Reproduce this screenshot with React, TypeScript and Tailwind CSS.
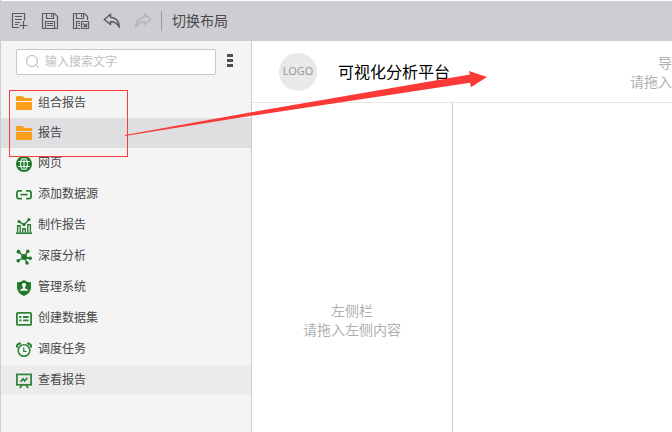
import { ReactNode, useState } from "react";

const FONT = "font-['Noto_Sans','Noto_Sans_CJK_SC',sans-serif]";

function IconNew() {
  return (
    <svg width="18" height="18" viewBox="0 0 18 18" fill="none" stroke="#5c5c60" strokeWidth="1.200">
      <path d="M9 15.500H2.500V1.500H14.500V8.500M5 4.500H12M5 7.500H12M5 10.500H10M5 12.500H8" />
      <path d="M13.500 9V17M9.500 13.500H17.500" />
    </svg>
  );
}

function IconSave() {
  return (
    <svg width="18" height="18" viewBox="0 0 18 18" fill="none" stroke="#5c5c60" strokeWidth="1.200">
      <path d="M1.500 1.500H13.500L16.500 4.500V16.500H1.500Z" />
      <path d="M5.500 1.500V6.500H12.500V1.500M10.500 2.500V5M4.500 16.500V9.500H13.500V16.500M6 11.500H12M6 13.500H12" />
    </svg>
  );
}

function IconSaveAs() {
  return (
    <svg width="18" height="18" viewBox="0 0 18 18" fill="none" stroke="#5c5c60" strokeWidth="1.200">
      <path d="M8 16.500H1.500V1.500H12.500L15.500 4.500V8" />
      <path d="M4.500 1.500V6.500H11.500V1.500M9.500 2.500V5M4.500 16V9.500H8M6 11.500H8M6 13.500H8" />
      <path d="M9.500 9.500H16.500V16.500H9.500Z" />
      <path d="M11 11.500L14 14M14.500 11.500V14.500H11.500" strokeWidth="1.300" />
    </svg>
  );
}

function IconArrow({ color, flip }: { color: string; flip?: boolean }) {
  return (
    <svg width="18" height="18" viewBox="0 0 18 18" fill="none" stroke={color} strokeWidth="1.500" strokeLinejoin="round">
      <path
        transform={flip ? "translate(18 0) scale(-1 1)" : undefined}
        d="M7.500 2.200L1.200 7.500L7.500 12.500V9.700C11.500 9.500 14.300 11.300 16.300 15.200C16.300 9.300 12.500 5.500 7.500 5.300Z"
      />
    </svg>
  );
}

function IconFolder() {
  return (
    <svg width="16" height="16" viewBox="0 0 16 16" fill="#faa01e">
      <path d="M0 1Q0 0 1 0H6Q7 0 7.500 1L8 2H15Q16 2 16 3V5H0Z" />
      <path d="M0 6H16V13Q16 14 15 14H1Q0 14 0 13Z" />
    </svg>
  );
}

function IconGlobe() {
  return (
    <svg width="16" height="16" viewBox="0 0 16 16" fill="none" stroke="#e4efe5" strokeWidth="1.200">
      <circle cx="8" cy="8" r="8" fill="#20792b" stroke="none" />
      <path d="M8 2V14M2.200 5.500H13.800M2.200 10.500H13.800" />
      <path d="M6.500 2Q2.500 8 6.500 14M9.500 2Q13.500 8 9.500 14" />
    </svg>
  );
}

function IconLink() {
  return (
    <svg width="16" height="16" viewBox="0 0 16 16" fill="none" stroke="#2e8237" strokeWidth="1.800">
      <path d="M6 3.900H3Q.9 3.900 .9 6V9.500Q.9 11.600 3 11.600H6M10 3.900H13Q15.100 3.900 15.100 6V9.500Q15.100 11.600 13 11.600H10M4.500 7.700H11.500" />
    </svg>
  );
}

function IconChart() {
  return (
    <svg width="16" height="16" viewBox="0 0 16 16" fill="none" stroke="#2e8237" strokeWidth="1.400">
      <path d="M0 15.300H16M1.600 15V7.800H4.200V15M6.700 15V10.800H9.300V15M11.800 15V6.800H14.400V15" />
      <path d="M3 3.500L8 6.800L13 1.500" strokeWidth="1.500" />
      <g fill="#20792b" stroke="none">
        <circle cx="3" cy="3.500" r="1.500" />
        <circle cx="8" cy="6.600" r="1.600" />
        <circle cx="13" cy="1.500" r="1.500" />
      </g>
    </svg>
  );
}

function IconNodes() {
  return (
    <svg width="16" height="16" viewBox="0 0 16 16" fill="#20792b" stroke="#20792b">
      <path d="M8 8L2.500 2.500M8 8L12 2.500M8 8L2 12M8 8L14 9.500M8 8L11 14" strokeWidth="1.400" />
      <g stroke="none">
        <circle cx="8.200" cy="8" r="3" />
        <circle cx="2.500" cy="2.700" r="2" />
        <circle cx="11.800" cy="2.200" r="1.700" />
        <circle cx="2.200" cy="11.800" r="1.800" />
        <circle cx="14.200" cy="9.200" r="1.800" />
        <circle cx="11" cy="14" r="1.800" />
      </g>
    </svg>
  );
}

function IconShield() {
  return (
    <svg width="16" height="16" viewBox="0 0 16 16" fill="#20792b">
      <path d="M8 0Q11 2.300 15 2.500V7.500Q14.500 13.500 8 16Q1.500 13.500 1 7.500V2.500Q5 2.300 8 0Z" />
      <path fill="#f4f4f4" d="M8 3A2 2 0 0 1 9 6.800L9.200 8.500Q12 8.800 12 10.800H4Q4 8.800 6.800 8.500L7 6.800A2 2 0 0 1 8 3Z" />
    </svg>
  );
}

function IconList() {
  return (
    <svg width="16" height="16" viewBox="0 0 16 16" fill="none" stroke="#2e8237" strokeWidth="1.800">
      <rect x=".9" y="1.900" width="14.200" height="12" rx="1" />
      <path d="M3.200 6H5.400M7 6H12.600M3.200 9.300H5.400M7 9.300H12.600" />
    </svg>
  );
}

function IconClock() {
  return (
    <svg width="16" height="16" viewBox="0 0 16 16" fill="none" stroke="#2e8237" strokeWidth="1.600">
      <circle cx="8" cy="8.500" r="5.800" />
      <path d="M1 5.500Q.5 1.600 5 1.400M15 5.500Q15.500 1.600 11 1.400" strokeWidth="2.200" />
      <path d="M7.700 5.500V9.300H10.500" strokeWidth="1.200" />
    </svg>
  );
}

function IconBoard() {
  return (
    <svg width="16" height="16" viewBox="0 0 16 16" fill="none" stroke="#2e8237" strokeWidth="1.700">
      <rect x=".9" y="1.400" width="14.200" height="10.400" />
      <path d="M4.500 8.800L7 5.800L8.700 8L11.500 4.800" />
      <path d="M6 12L4 15M10 12L12 15" />
    </svg>
  );
}

const folders = ["组合报告", "报告"];

const tools: { name: string; icon: ReactNode; active?: boolean }[] = [
  { name: "网页", icon: <IconGlobe /> },
  { name: "添加数据源", icon: <IconLink /> },
  { name: "制作报告", icon: <IconChart /> },
  { name: "深度分析", icon: <IconNodes /> },
  { name: "管理系统", icon: <IconShield /> },
  { name: "创建数据集", icon: <IconList /> },
  { name: "调度任务", icon: <IconClock /> },
  { name: "查看报告", icon: <IconBoard />, active: true },
];

function Item({ name, icon, className = "" }: { name: string; icon: ReactNode; className?: string }) {
  return (
    <li>
      <button className={`flex h-[30px] w-full items-center gap-1.5 px-[15px] text-left text-xs text-[#484848] ${className}`}>
        <span className="mt-0.5 shrink-0">{icon}</span>
        {name}
      </button>
    </li>
  );
}

export default function App() {
  const [search, setSearch] = useState("");
  const [selected] = useState("报告");

  return (
    <div className={`relative flex h-screen flex-col overflow-hidden border-l border-[#cccccf] bg-white pt-px ${FONT}`}>
      <header className="flex h-10 shrink-0 items-center bg-[#cecdd2] pl-[9px]">
        <div className="flex items-center gap-[13px]">
          <button aria-label="新建"><IconNew /></button>
          <button aria-label="保存"><IconSave /></button>
          <button aria-label="另存为"><IconSaveAs /></button>
          <button aria-label="撤销"><IconArrow color="#5c5c60" /></button>
          <button aria-label="重做" disabled><IconArrow color="#b4b4b8" flip /></button>
        </div>
        <button className="ml-[9px] h-5 border-l border-[#9b9b9f] pl-2.5 text-sm leading-5 text-[#484848]">切换布局</button>
      </header>

      <div className="flex min-h-0 flex-1">
        <aside className="w-[251px] shrink-0 border-r border-[#cccccf] bg-[#f4f4f4] pt-2">
          <div className="flex items-center pl-[15px]">
            <label className="flex h-[26px] w-[200px] items-center gap-1 rounded-xs border border-[#c8c8cb] bg-white pl-2">
              <svg width="16" height="16" viewBox="0 0 16 16" fill="none" stroke="#b2b2b6" className="shrink-0">
                <circle cx="7" cy="7" r="5.500" />
                <path d="M11 11L14 14" />
              </svg>
              <input
                aria-label="搜索"
                placeholder="输入搜索文字"
                value={search}
                onChange={(e) => setSearch(e.target.value)}
                className="w-full min-w-0 text-xs text-[#484848] outline-none placeholder:text-[#c0c0c0]"
              />
            </label>
            <button aria-label="更多" className="mb-1 ml-[11px] flex flex-col gap-0.5">
              <span className="h-[3px] w-1.5 bg-[#505050]" />
              <span className="h-[3px] w-1.5 bg-[#505050]" />
              <span className="h-[3px] w-1.5 bg-[#505050]" />
            </button>
          </div>

          <ul className="mt-[13px]">
            {folders.map((name) => (
              <Item key={name} name={name} icon={<IconFolder />} className={name === selected ? "bg-[#dfdee1]" : ""} />
            ))}
          </ul>
          <ul className="flex flex-col gap-px">
            {tools.map((t) => (
              <Item key={t.name} name={t.name} icon={t.icon} className={t.active ? "bg-[#ebebeb]" : ""} />
            ))}
          </ul>
        </aside>

        <main className="flex min-w-0 flex-1 flex-col">
          <div className="flex h-[62px] shrink-0 items-center border-b border-[#e8e8e8] pl-[27px]">
            <div className="flex size-[38px] items-center justify-center rounded-full bg-[#e9e9eb] text-[11px] text-[#98989b]">LOGO</div>
            <h1 className="ml-[21px] text-base text-black">可视化分析平台</h1>
            <div className="ml-auto text-right text-sm leading-[19px] text-[#b0b0b0]">
              <p>导</p>
              <p>请拖入</p>
            </div>
          </div>
          <div className="flex flex-1">
            <section className="flex w-[201px] items-center justify-center border-r border-[#cccccf] pt-26 text-center text-sm leading-[19px] text-[#b0b0b0]">
              <div>
                <p>左侧栏</p>
                <p>请拖入左侧内容</p>
              </div>
            </section>
            <section className="flex-1" />
          </div>
        </main>
      </div>

      {/* drag hint: framed folders and the arrow to the title bar */}
      <svg className="pointer-events-none absolute top-0 -left-px" width="500" height="170" viewBox="0 0 500 170">
        <rect x="9.500" y="90.500" width="118" height="66" fill="none" stroke="#fb3c3c" />
        <path fill="#fb3a38" d="M125 135L250 112.500L470 74.500L469 71L487 77L471 87.300L470 82.800L250 116L125 136Z" />
      </svg>
    </div>
  );
}
